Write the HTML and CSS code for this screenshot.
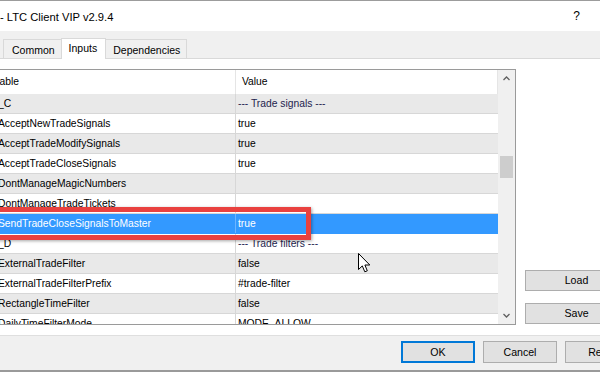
FILE: index.html
```html
<!DOCTYPE html>
<html>
<head>
<meta charset="utf-8">
<link rel="stylesheet" href="styles.css">
</head>
<body>
<div class="titlebar">
  <span class="title">- LTC Client VIP v2.9.4</span>
  <span class="help">?</span>
</div>
<div class="tabstrip">
  <div class="tab">Common</div>
  <div class="tab active">Inputs</div>
  <div class="tab">Dependencies</div>
</div>
<div class="page">
  <div class="grid">
    <div class="list">
      <div class="row head"><div class="name">Variable</div><div class="val">Value</div></div>
      <div class="row odd"><div class="name">_C</div><div class="val sep">--- Trade signals ---</div></div>
      <div class="row"><div class="name">AcceptNewTradeSignals</div><div class="val">true</div></div>
      <div class="row odd"><div class="name">AcceptTradeModifySignals</div><div class="val">true</div></div>
      <div class="row"><div class="name">AcceptTradeCloseSignals</div><div class="val">true</div></div>
      <div class="row odd"><div class="name">DontManageMagicNumbers</div><div class="val"></div></div>
      <div class="row"><div class="name">DontManageTradeTickets</div><div class="val"></div></div>
      <div class="row sel"><div class="name">SendTradeCloseSignalsToMaster</div><div class="val">true</div></div>
      <div class="row"><div class="name">_D</div><div class="val sep">--- Trade filters ---</div></div>
      <div class="row odd"><div class="name">ExternalTradeFilter</div><div class="val">false</div></div>
      <div class="row"><div class="name">ExternalTradeFilterPrefix</div><div class="val">#trade-filter</div></div>
      <div class="row odd"><div class="name">RectangleTimeFilter</div><div class="val">false</div></div>
      <div class="row"><div class="name">DailyTimeFilterMode</div><div class="val">MODE_ALLOW</div></div>
    </div>
    <div class="vscroll">
      <svg class="arrow" width="17" height="17" viewBox="0 0 17 17"><path d="M5.5 10 L8.5 7 L11.5 10" fill="none" stroke="#606060" stroke-width="1.3"/></svg>
      <div class="track"><div class="thumb"></div></div>
      <svg class="arrow" width="17" height="17" viewBox="0 0 17 17"><path d="M5.5 7 L8.5 10 L11.5 7" fill="none" stroke="#606060" stroke-width="1.3"/></svg>
    </div>
  </div>
  <div class="side">
    <div class="btn wide">Load</div>
    <div class="btn wide">Save</div>
  </div>
</div>
<div class="footer">
  <div class="btn default">OK</div>
  <div class="btn">Cancel</div>
  <div class="btn">Reset</div>
</div>
<div class="highlight"></div>
<svg class="cursor" width="14" height="21" viewBox="0 0 14 21"><path d="M0.5 0.5 L0.5 16.5 L4.3 12.9 L6.8 18.8 L9.3 17.8 L6.9 12 L11.8 12 Z" fill="#fff" stroke="#000" stroke-width="1" stroke-linejoin="miter"/></svg>
</body>
</html>
```
FILE: styles.css
```css
* { box-sizing: border-box; }
html, body { margin: 0; padding: 0; }
body {
  width: 600px;
  height: 372px;
  overflow: hidden;
  position: relative;
  background: #fff;
  font-family: "Liberation Sans", Arial, sans-serif;
  font-size: 10.3px;
  color: #000;
}
.titlebar {
  height: 31px;
  border-top: 1px solid #9c9c9c;
  background: #fff;
  display: flex;
  align-items: center;
  justify-content: space-between;
  padding: 0 20px 0 0;
  font-size: 11.2px;
}
.title { padding-top: 1px; }
.help { font-size: 12px; padding-top: 0; }
.tabstrip {
  height: 27px;
  background: #f0f0f0;
  display: flex;
  align-items: flex-end;
  padding-left: 3px;
  font-size: 10.5px;
}
.tab {
  height: 19px;
  border: 1px solid #d9d9d9;
  border-bottom: none;
  padding: 4px 6px 0 7px;
  background: #f0f0f0;
  margin-right: -1px;
}
.tab:first-child { padding-left: 8px; }
.tab.active {
  height: 21px;
  margin-bottom: -1px;
  background: #fff;
  padding: 3px 8px 0 7px;
  position: relative;
  z-index: 1;
}
.page {
  height: 277px;
  border-top: 1px solid #d9d9d9;
  background: #fff;
  padding-top: 10px;
  display: flex;
  align-items: flex-start;
}
.grid {
  margin-left: -40px;
  width: 556px;
  height: 256px;
  border: 1px solid #9a9a9a;
  display: flex;
  overflow: hidden;
  flex: none;
}
.list { width: 537px; flex: none; }
.row {
  display: flex;
  height: 20px;
  border-bottom: 1px solid #d7d7d7;
  background: #fff;
  line-height: 19px;
  white-space: nowrap;
}
.row.odd { background: #e9e9e9; }
.row.head { height: 24px; line-height: 24px; border-bottom: none; background: #fff; }
.row.sel { background: #3399ff; color: #fff; border-bottom-color: #3399ff; }
.name {
  width: 275px;
  flex: none;
  padding-left: 37px;
  border-right: 1px solid #d7d7d7;
  overflow: hidden;
}
.head .name { padding-left: 21px; border-right-color: #e5e5e5; }
.val {
  flex: 1;
  padding-left: 2px;
  overflow: hidden;
}
.head .val { padding-left: 6px; border-right: 1px solid #e5e5e5; }
.sel .name { border-right-color: #6db5ff; }
.sep { color: #241e4e; }
.vscroll {
  width: 17px;
  flex: none;
  background: #f0f0f0;
  display: flex;
  flex-direction: column;
}
.arrow { display: block; flex: none; }
.track { flex: 1; padding-top: 69px; padding-left: 2px; }
.thumb { width: 13px; height: 22px; background: #cdcdcd; }
.side {
  margin-left: 9px;
  height: 256px;
  display: flex;
  flex-direction: column;
  justify-content: flex-end;
  gap: 12px;
  padding-bottom: 1px;
}
.btn {
  height: 22px;
  width: 74px;
  flex: none;
  background: #e1e1e1;
  border: 1px solid #adadad;
  text-align: center;
  line-height: 20px;
  font-size: 10.6px;
}
.btn.wide { width: 103px; height: 21px; line-height: 19px; }
.btn.default { border: 2px solid #0078d7; line-height: 18px; }
.footer {
  height: 37px;
  border-top: 1px solid #dfdfdf;
  border-bottom: 2px solid #9a9a9a;
  background: #f0f0f0;
  display: flex;
  gap: 8px;
  padding: 5px 0 0 401px;
  overflow: hidden;
}
.highlight {
  position: absolute;
  left: -12px;
  top: 207px;
  width: 323px;
  height: 33px;
  border: 5px solid #e9413f;
  box-shadow: 1px 1px 3px rgba(0,0,0,0.35);
}
.cursor {
  position: absolute;
  left: 358px;
  top: 253px;
}
```
